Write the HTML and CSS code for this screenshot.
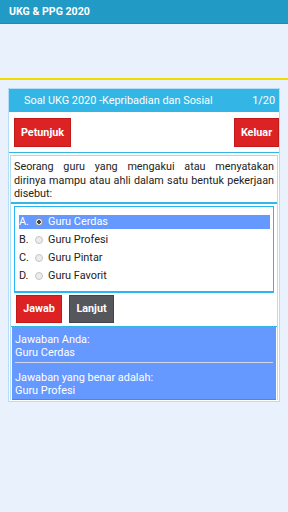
FILE: index.html
```html
<!DOCTYPE html>
<html lang="id">
<head>
    <meta charset="UTF-8">
    <meta name="viewport" content="width=device-width, initial-scale=1.0">
    <title>UKG & PPG 2020</title>
    <link rel="stylesheet" href="styles.css">
</head>
<body>
    <header class="appbar">UKG &amp; PPG 2020</header>
    <div class="banner"></div>

    <main class="card">
        <div class="card-head">
            <span>Soal UKG 2020 -Kepribadian dan Sosial</span>
            <span>1/20</span>
        </div>

        <div class="top-actions">
            <button class="btn btn-red btn-wide">Petunjuk</button>
            <button class="btn btn-red">Keluar</button>
        </div>

        <div class="content">
            <div class="question">
                <p><span class="line">Seorang guru yang mengakui atau menyatakan</span> dirinya mampu atau ahli dalam satu bentuk pekerjaan disebut:</p>
            </div>

            <div class="options">
                <div class="option selected">
                    <span class="letter">A.</span><span class="radio checked"></span><span>Guru Cerdas</span>
                </div>
                <div class="option">
                    <span class="letter">B.</span><span class="radio"></span><span>Guru Profesi</span>
                </div>
                <div class="option">
                    <span class="letter">C.</span><span class="radio"></span><span>Guru Pintar</span>
                </div>
                <div class="option">
                    <span class="letter">D.</span><span class="radio"></span><span>Guru Favorit</span>
                </div>
            </div>

            <div class="answer-actions">
                <button class="btn btn-red">Jawab</button>
                <button class="btn btn-dark">Lanjut</button>
            </div>

            <div class="result">
                <p>Jawaban Anda:<br>Guru Cerdas</p>
                <hr>
                <p>Jawaban yang benar adalah:<br>Guru Profesi</p>
            </div>
        </div>
    </main>
</body>
</html>
```

FILE: styles.css
```css
body {
    font-family: Roboto, "Liberation Sans", sans-serif;
    background-color: #e8f1fc;
    margin: 0;
    padding: 0;
}
.appbar {
    height: 23px;
    line-height: 23px;
    padding-left: 9px;
    background-color: #219ac6;
    border-bottom: 1px solid #1b8cb6;
    color: #fff;
    font-weight: bold;
    font-size: 10.6px;
}
.banner {
    height: 54px;
    border-bottom: 2px solid #f0dc00;
}
.card {
    margin: 8px 8px 0;
    background: #fff;
    border: 1px solid #b3def5;
    padding-bottom: 1px;
}
.card-head {
    display: flex;
    justify-content: space-between;
    align-items: center;
    height: 23px;
    padding: 0 4px 0 15px;
    background-color: #33b5e5;
    color: #fff;
    font-size: 10.9px;
}
.top-actions {
    display: flex;
    justify-content: space-between;
    height: 34px;
    padding: 6px 0 0 5px;
    border-bottom: 1px solid #33b5e5;
}
.btn {
    height: 29px;
    padding: 0;
    width: 45px;
    border: 1px solid #c01a1a;
    color: #fff;
    font-family: Roboto, "Liberation Sans", sans-serif;
    font-weight: bold;
    font-size: 10.8px;
}
.btn-red {
    background-color: #dc2222;
}
.btn-wide {
    width: 57px;
}
.btn-dark {
    background-color: #56575c;
    border-color: #444448;
}
.content {
    margin: 0 1px;
    border-left: 1px solid #b3def5;
    border-right: 1px solid #b3def5;
}
.question {
    margin-top: 2px;
    border-top: 1px solid #a5dbf5;
    border-bottom: 2px solid #33b5e5;
    padding: 4px 3px 1px 3px;
}
.question p {
    margin: 0;
    font-size: 10.8px;
    line-height: 13.5px;
    text-align: justify;
    color: #222;
}
.question .line {
    display: block;
    text-align-last: justify;
}
.options {
    margin: 2px 3px 0 3px;
    border: 1px solid #29b6f6;
    border-bottom-width: 2px;
    padding: 8px 3px 4px 4px;
}
.option {
    display: flex;
    align-items: center;
    height: 14px;
    margin-bottom: 4px;
    font-size: 10.9px;
    color: #222;
}
.option.selected {
    background-color: #6699ff;
    color: #fff;
}
.letter {
    width: 16px;
}
.radio {
    width: 6px;
    height: 6px;
    margin-right: 5px;
    border-radius: 50%;
    border: 1px solid #c4c4c4;
    background: #ececec;
}
.radio.checked {
    background: radial-gradient(circle, #444 0 1.6px, #f2f2f2 2px);
    border-color: #999;
}
.answer-actions {
    display: flex;
    gap: 7px;
    padding: 2px 0 3px 5px;
    border-bottom: 1px solid #33b5e5;
}
.answer-actions .btn {
    height: 28px;
}
.answer-actions .btn-red {
    width: 46px;
}
.result {
    margin: 0 1px;
    background-color: #6699ff;
    border-bottom: 1px solid #3b8cf0;
    color: #fff;
    font-size: 10.9px;
    line-height: 13px;
    padding: 6px 0 2px 3px;
}
.result p {
    margin: 0;
}
.result hr {
    margin: 3px 3px 8px 0;
    border: none;
    border-top: 1px solid #cfd6e4;
}
```
